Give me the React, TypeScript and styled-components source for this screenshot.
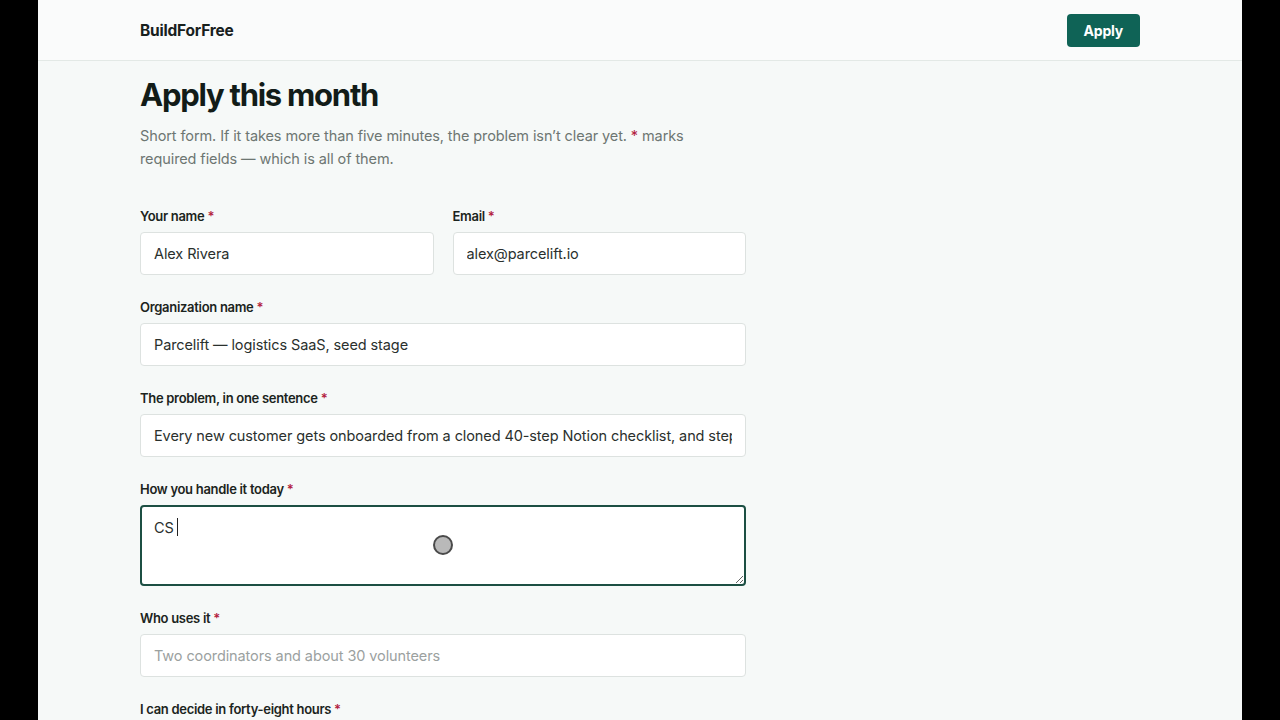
import React from 'react'
import styled, { createGlobalStyle, css } from 'styled-components'

const GlobalStyle = createGlobalStyle`
	html, body {
		margin: 0;
		padding: 0;
		background: #000;
		overflow: hidden;
	}
	* {
		box-sizing: border-box;
	}
`

const Frame = styled.div`
	margin: 0 38px;
	min-height: 100vh;
	background: #f6f9f8;
	font-family: Inter, 'Noto Sans', sans-serif;
	color: #16201c;
`

const TopBar = styled.header`
	height: 61px;
	background: #fafbfb;
	border-bottom: 1px solid #e3e9e6;
	display: flex;
	align-items: center;
	justify-content: space-between;
	padding: 0 102px;
`

const Logo = styled.div`
	font-size: 15.5px;
	font-weight: 700;
	letter-spacing: -0.2px;
	color: #18201d;
`

const ApplyButton = styled.button`
	height: 33px;
	padding: 0 17px;
	border: none;
	border-radius: 4px;
	background: #0f6356;
	color: #fff;
	font-family: inherit;
	font-size: 14px;
	font-weight: 700;
	letter-spacing: -0.2px;
	cursor: pointer;
`

const Main = styled.main`
	padding: 15px 102px 40px;
`

const Title = styled.h1`
	margin: 0;
	font-size: 31px;
	line-height: 38px;
	font-weight: 700;
	letter-spacing: -1.25px;
	color: #121c18;
`

const Lead = styled.p`
	margin: 10px 0 0;
	max-width: 560px;
	font-size: 14.5px;
	line-height: 23px;
	letter-spacing: -0.1px;
	color: #6d7672;
`

const Star = styled.span`
	color: #b3223f;
`

const Form = styled.form`
	margin-top: 37px;
	width: 606px;
	display: flex;
	flex-direction: column;
	gap: 23px;
`

const Row = styled.div`
	display: grid;
	grid-template-columns: 1fr 1fr;
	gap: 19px;
`

const Field = styled.label`
	display: flex;
	flex-direction: column;
	gap: 7px;
`

const LabelText = styled.span`
	font-size: 13px;
	line-height: 18px;
	font-weight: 600;
	letter-spacing: -0.3px;
	color: #1b2420;
`

const fieldBox = css`
	width: 100%;
	background: #fff;
	border: 1px solid #dde2e0;
	border-radius: 4px;
	font-family: inherit;
	font-size: 14.5px;
	letter-spacing: -0.1px;
	color: #2a302d;
	outline: none;
	&::placeholder {
		color: #9ba19f;
	}
`

const Input = styled.input`
	${fieldBox};
	height: 43px;
	padding: 0 13px;
`

const AreaWrap = styled.div`
	position: relative;
`

const TextArea = styled.textarea<{ $active?: boolean }>`
	${fieldBox};
	display: block;
	height: 81px;
	padding: 11px 13px;
	resize: vertical;
	line-height: 21px;
	${(p) =>
		p.$active &&
		css`
			border: 2px solid #1c4f43;
			padding: 10px 12px;
		`}
`

const Caret = styled.span`
	position: absolute;
	left: 37px;
	top: 13px;
	width: 1px;
	height: 18px;
	background: #222;
`

const Pointer = styled.span`
	position: absolute;
	left: 293px;
	top: 30px;
	width: 20px;
	height: 20px;
	border-radius: 50%;
	background: #b9b9b9;
	border: 2px solid #4a4a4a;
	pointer-events: none;
`

const Req = () => <Star> *</Star>

export default function App() {
	return (
		<>
			<GlobalStyle />
			<Frame>
				<TopBar>
					<Logo>BuildForFree</Logo>
					<ApplyButton>Apply</ApplyButton>
				</TopBar>
				<Main>
					<Title>Apply this month</Title>
					<Lead>
						Short form. If it takes more than five minutes, the problem isn’t clear yet. <Star>*</Star> marks
						required fields — which is all of them.
					</Lead>
					<Form onSubmit={(e) => e.preventDefault()}>
						<Row>
							<Field>
								<LabelText>
									Your name
									<Req />
								</LabelText>
								<Input defaultValue="Alex Rivera" />
							</Field>
							<Field>
								<LabelText>
									Email
									<Req />
								</LabelText>
								<Input defaultValue="alex@parcelift.io" />
							</Field>
						</Row>
						<Field>
							<LabelText>
								Organization name
								<Req />
							</LabelText>
							<Input defaultValue="Parcelift — logistics SaaS, seed stage" />
						</Field>
						<Field>
							<LabelText>
								The problem, in one sentence
								<Req />
							</LabelText>
							<Input defaultValue="Every new customer gets onboarded from a cloned 40-step Notion checklist, and steps get missed." />
						</Field>
						<Field>
							<LabelText>
								How you handle it today
								<Req />
							</LabelText>
							<AreaWrap>
								<TextArea $active defaultValue="CS" />
								<Caret />
								<Pointer />
							</AreaWrap>
						</Field>
						<Field>
							<LabelText>
								Who uses it
								<Req />
							</LabelText>
							<Input placeholder="Two coordinators and about 30 volunteers" />
						</Field>
						<Field>
							<LabelText>
								I can decide in forty-eight hours
								<Req />
							</LabelText>
							<Input />
						</Field>
					</Form>
				</Main>
			</Frame>
		</>
	)
}
